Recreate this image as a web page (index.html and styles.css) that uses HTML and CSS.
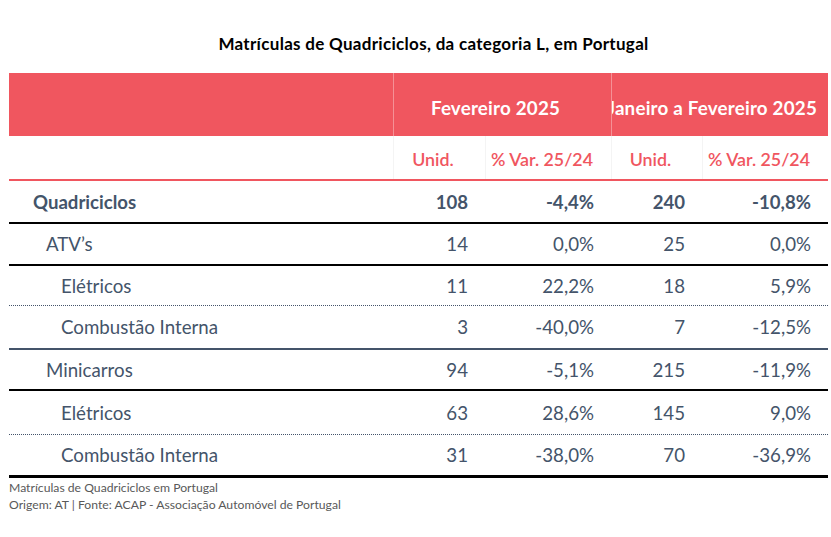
FILE: index.html
```html
<!DOCTYPE html>
<html lang="pt">
<head>
<meta charset="utf-8">
<title>Matrículas de Quadriciclos</title>
<link rel="stylesheet" href="styles.css">
</head>
<body>
<div class="page">
  <h1 class="title">Matrículas de Quadriciclos, da categoria L, em Portugal</h1>
  <div class="table">
    <div class="row head">
      <div class="cell label"></div>
      <div class="cell group g1">Fevereiro 2025</div>
      <div class="cell group g2"><span>Janeiro a Fevereiro 2025</span></div>
    </div>
    <div class="row sub">
      <div class="cell label"></div>
      <div class="cell sh">Unid.</div>
      <div class="cell sh">% Var. 25/24</div>
      <div class="cell sh">Unid.</div>
      <div class="cell sh">% Var. 25/24</div>
    </div>
    <div class="row total b-black r1">
      <div class="cell label l0">Quadriciclos</div>
      <div class="cell num">108</div>
      <div class="cell num">-4,4%</div>
      <div class="cell num">240</div>
      <div class="cell num">-10,8%</div>
    </div>
    <div class="row b-black r2">
      <div class="cell label l1">ATV’s</div>
      <div class="cell num">14</div>
      <div class="cell num">0,0%</div>
      <div class="cell num">25</div>
      <div class="cell num">0,0%</div>
    </div>
    <div class="row b-dot r3">
      <div class="cell label l2">Elétricos</div>
      <div class="cell num">11</div>
      <div class="cell num">22,2%</div>
      <div class="cell num">18</div>
      <div class="cell num">5,9%</div>
    </div>
    <div class="row b-slate r4">
      <div class="cell label l2">Combustão Interna</div>
      <div class="cell num">3</div>
      <div class="cell num">-40,0%</div>
      <div class="cell num">7</div>
      <div class="cell num">-12,5%</div>
    </div>
    <div class="row b-black r5">
      <div class="cell label l1">Minicarros</div>
      <div class="cell num">94</div>
      <div class="cell num">-5,1%</div>
      <div class="cell num">215</div>
      <div class="cell num">-11,9%</div>
    </div>
    <div class="row b-dot r6">
      <div class="cell label l2">Elétricos</div>
      <div class="cell num">63</div>
      <div class="cell num">28,6%</div>
      <div class="cell num">145</div>
      <div class="cell num">9,0%</div>
    </div>
    <div class="row b-end r7">
      <div class="cell label l2">Combustão Interna</div>
      <div class="cell num">31</div>
      <div class="cell num">-38,0%</div>
      <div class="cell num">70</div>
      <div class="cell num">-36,9%</div>
    </div>
  </div>
  <div class="notes">
    <p>Matrículas de Quadriciclos em Portugal</p>
    <p>Origem: AT | Fonte: ACAP - Associação Automóvel de Portugal</p>
  </div>
</div>
</body>
</html>
```

FILE: styles.css
```css
* { box-sizing: border-box; }
html, body { margin: 0; padding: 0; background: #fff; }
.page {
  padding: 35px 3px 0 9px;
  font-family: Lato, "Liberation Sans", sans-serif;
  color: #44546a;
}
.title {
  margin: 0 0 21px 0;
  padding-left: 30px;
  height: 17px;
  line-height: 17px;
  font-size: 17px;
  letter-spacing: 0.3px;
  font-weight: 700;
  color: #000;
  text-align: center;
  font-family: Lato, "Liberation Sans", sans-serif;
}
.table {
  width: 819px;
}
.row {
  display: grid;
  grid-template-columns: 384px 92px 126px 91px 126px;
  align-items: stretch;
}
.cell {
  display: flex;
  align-items: center;
  white-space: nowrap;
}
.head {
  grid-template-columns: 384px 218px 217px;
  height: 63px;
  background: #f0565f;
  color: #fff;
  font-weight: 700;
  font-size: 18.8px;
  letter-spacing: 0.2px;
}
.group {
  border-left: 1px solid rgba(255, 255, 255, 0.35);
  overflow: hidden;
  padding-top: 5px;
}
.g1 { justify-content: center; padding-right: 14px; }
.g2 { justify-content: flex-end; padding-right: 11px; }
.sub {
  height: 45px;
  border-bottom: 2px solid #f0565f;
  color: #f0565f;
  font-weight: 600;
  font-size: 17.8px;
}
.sh {
  justify-content: center;
  padding-right: 13px;
  padding-top: 3px;
  border-left: 1px solid #f4f4f4;
}
.num {
  justify-content: flex-end;
  padding-right: 17px;
  font-size: 18.7px;
}
.label { font-size: 18.7px; }
.l0 { padding-left: 24px; font-weight: 700; font-size: 18.6px; }
.total .num { font-weight: 700; font-size: 18.6px; }
.l1 { padding-left: 37px; }
.l2 { padding-left: 52px; }
.b-black { border-bottom: 2px solid #000; }
.b-dot { border-bottom: 1px dotted #44546a; }
.b-slate { border-bottom: 2px solid #44546a; }
.b-end { border-bottom: 3px solid #000; }
.r1 { height: 43px; }
.r2 { height: 42px; }
.r3 { height: 40px; }
.r4 { height: 44px; }
.r5 { height: 41px; }
.r6 { height: 44px; }
.r7 { height: 43px; }
.notes {
  padding-top: 1px;
  font-size: 12.2px;
  color: #595959;
  font-family: Lato, "Liberation Sans", sans-serif;
}
.notes p {
  margin: 0;
  line-height: 17px;
}
```
